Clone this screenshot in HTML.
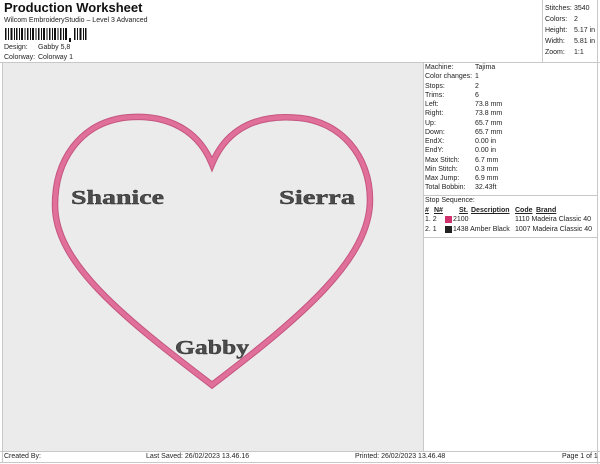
<!DOCTYPE html>
<html><head><style>
body{margin:0;width:600px;height:464px;background:#fff;font-family:"Liberation Sans",Arial,sans-serif;color:#222;position:relative;overflow:hidden}
.a{position:absolute;white-space:nowrap}
.s{font-size:7px}
.ln{position:absolute;background:#c8c8c8}
</style></head><body>
<div class="a" style="left:4px;top:0px;font-size:13px;font-weight:bold;color:#111">Production Worksheet</div>
<div class="a s" style="left:4px;top:17px">Wilcom EmbroideryStudio – Level 3 Advanced</div>
<svg class="a" style="left:5px;top:28px" width="85" height="14">
<g fill="#111">
<rect x="0" y="0" width="1.5" height="12"/><rect x="3" y="0" width="1" height="12"/><rect x="5.5" y="0" width="2" height="12"/><rect x="9" y="0" width="1" height="12"/><rect x="11" y="0" width="1.5" height="12"/><rect x="14" y="0" width="1" height="12"/><rect x="16" y="0" width="2" height="12"/><rect x="19.5" y="0" width="1" height="12"/><rect x="22" y="0" width="1.5" height="12"/><rect x="25" y="0" width="1" height="12"/><rect x="27" y="0" width="2" height="12"/><rect x="30.5" y="0" width="1" height="12"/><rect x="33" y="0" width="1.5" height="12"/><rect x="36" y="0" width="1" height="12"/><rect x="38" y="0" width="2" height="12"/><rect x="41.5" y="0" width="1" height="12"/><rect x="44" y="0" width="1.5" height="12"/><rect x="47" y="0" width="1" height="12"/><rect x="49" y="0" width="2" height="12"/><rect x="52.5" y="0" width="1" height="12"/><rect x="55" y="0" width="1.5" height="12"/><rect x="58" y="0" width="1" height="12"/><rect x="60" y="0" width="2" height="12"/>
<rect x="64" y="10" width="2" height="4"/>
<rect x="69" y="0" width="1.5" height="12"/><rect x="72" y="0" width="1" height="12"/><rect x="74.5" y="0" width="2" height="12"/><rect x="78" y="0" width="1" height="12"/><rect x="80" y="0" width="1.5" height="12"/></g></svg>
<div class="a s" style="left:4px;top:44px">Design:</div><div class="a s" style="left:38px;top:44px">Gabby 5,8</div>
<div class="a s" style="left:4px;top:54px">Colorway:</div><div class="a s" style="left:38px;top:54px">Colorway 1</div>
<div class="ln" style="left:0;top:62px;width:600px;height:1px"></div>
<div class="ln" style="left:542px;top:0;width:1px;height:62px"></div>
<div class="ln" style="left:597px;top:0;width:1px;height:464px"></div>
<div class="ln" style="left:2px;top:62px;width:1px;height:400px"></div>
<div class="ln" style="left:0;top:451px;width:600px;height:1px"></div>
<div class="ln" style="left:0;top:462px;width:600px;height:1px"></div>
<div class="a" style="left:3px;top:63px;width:420px;height:388px;background:#ebebeb"></div>
<div class="ln" style="left:423px;top:62px;width:1px;height:389px"></div>
<div class="ln" style="left:423px;top:195px;width:174px;height:1px"></div>
<div class="ln" style="left:423px;top:237px;width:174px;height:1px"></div>
<div class="a s" style="left:545px;top:3px;line-height:11px">Stitches:<br>Colors:<br>Height:<br>Width:<br>Zoom:</div>
<div class="a s" style="left:574px;top:3px;line-height:11px">3540<br>2<br>5.17 in<br>5.81 in<br>1:1</div>
<div class="a s" style="left:425px;top:63px;line-height:9.25px">Machine:<br>Color changes:<br>Stops:<br>Trims:<br>Left:<br>Right:<br>Up:<br>Down:<br>EndX:<br>EndY:<br>Max Stitch:<br>Min Stitch:<br>Max Jump:<br>Total Bobbin:</div>
<div class="a s" style="left:475px;top:63px;line-height:9.25px">Tajima<br>1<br>2<br>6<br>73.8 mm<br>73.8 mm<br>65.7 mm<br>65.7 mm<br>0.00 in<br>0.00 in<br>6.7 mm<br>0.3 mm<br>6.9 mm<br>32.43ft</div>
<div class="a s" style="left:425px;top:197px">Stop Sequence:</div>
<div class="a s" style="left:425px;top:207px;font-weight:bold;text-decoration:underline">#</div>
<div class="a s" style="left:434px;top:207px;font-weight:bold;text-decoration:underline">N#</div>
<div class="a s" style="left:459px;top:207px;font-weight:bold;text-decoration:underline">St.</div>
<div class="a s" style="left:471px;top:207px;font-weight:bold;text-decoration:underline">Description</div>
<div class="a s" style="left:515px;top:207px;font-weight:bold;text-decoration:underline">Code</div>
<div class="a s" style="left:536px;top:207px;font-weight:bold;text-decoration:underline">Brand</div>
<div class="a s" style="left:425px;top:216px">1. 2</div>
<div class="a" style="left:445px;top:216px;width:7px;height:7px;background:#d0326e"></div>
<div class="a s" style="left:453px;top:216px">2100</div>
<div class="a s" style="left:515px;top:216px">1110 Madeira Classic 40</div>
<div class="a s" style="left:425px;top:226px">2. 1</div>
<div class="a" style="left:445px;top:226px;width:7px;height:7px;background:#222"></div>
<div class="a s" style="left:453px;top:226px">1438 Amber Black</div>
<div class="a s" style="left:515px;top:226px">1007 Madeira Classic 40</div>
<svg class="a" style="left:0;top:0" width="423" height="451">
<path d="M212,164 C196,124 158,113 122,118 C80,125 55,160 55,205 C55,262 120,315 212,385 C304,315 370,258 370,200 C370,155 340,122 300,118 C262,114 228,125 212,164 Z" fill="none" stroke="#c4557f" stroke-width="6.5"/>
<path d="M212,164 C196,124 158,113 122,118 C80,125 55,160 55,205 C55,262 120,315 212,385 C304,315 370,258 370,200 C370,155 340,122 300,118 C262,114 228,125 212,164 Z" fill="none" stroke="#e0709a" stroke-width="4.5"/>
<g font-family="'Liberation Serif',serif" font-weight="bold" font-size="20" fill="#4c4c4c" stroke="#2a2a2a" stroke-width="0.4">
<text x="71" y="204" textLength="93" lengthAdjust="spacingAndGlyphs">Shanice</text>
<text x="279" y="204" textLength="76" lengthAdjust="spacingAndGlyphs">Sierra</text>
<text x="175" y="354" textLength="74" lengthAdjust="spacingAndGlyphs">Gabby</text>
</g></svg>
<div class="a s" style="left:4px;top:453px">Created By:</div>
<div class="a s" style="left:146px;top:453px">Last Saved: 26/02/2023 13.46.16</div>
<div class="a s" style="left:355px;top:453px">Printed: 26/02/2023 13.46.48</div>
<div class="a s" style="left:562px;top:453px">Page 1 of 1</div>
</body></html>
